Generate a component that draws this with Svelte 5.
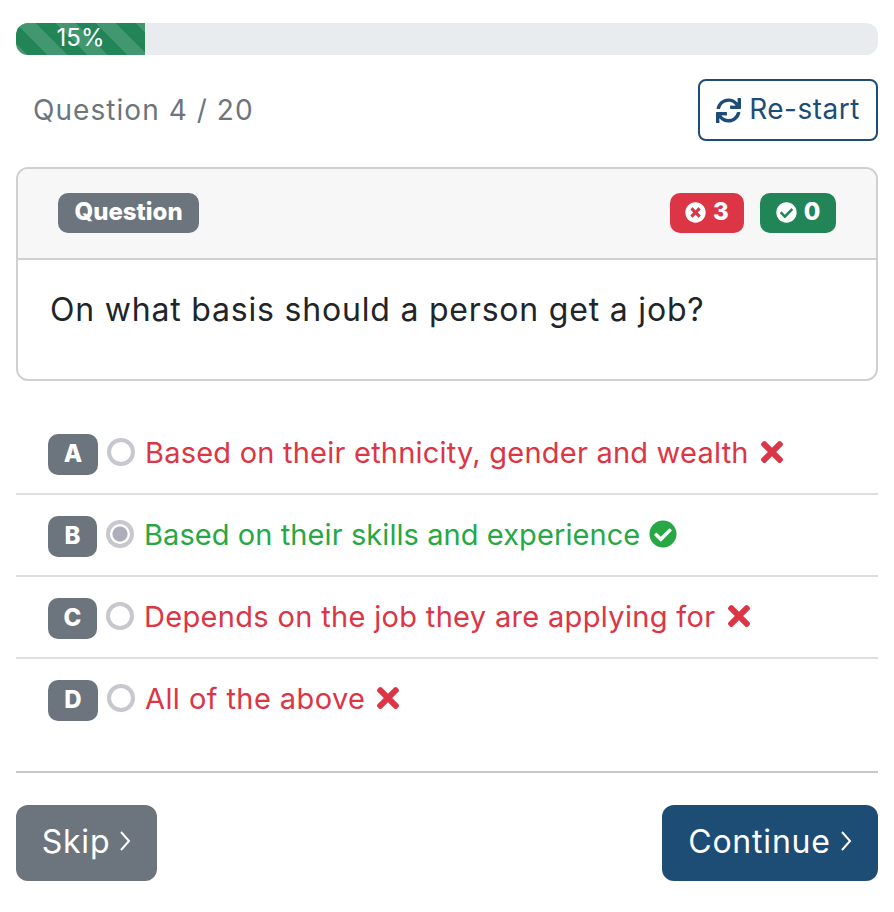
<script lang="ts">
  const options = [
    { letter: 'A', text: 'Based on their ethnicity, gender and wealth', correct: false, selected: false, narrow: false, spacing: 0.22 },
    { letter: 'B', text: 'Based on their skills and experience', correct: true, selected: true, narrow: true, spacing: 0.08 },
    { letter: 'C', text: 'Depends on the job they are applying for', correct: false, selected: false, narrow: true, spacing: 0.33 },
    { letter: 'D', text: 'All of the above', correct: false, selected: false, narrow: false, spacing: 0.42 }
  ];

  const timesPath = 'M242.72 256l100.07-100.07c12.28-12.28 12.28-32.19 0-44.48l-22.24-22.24c-12.28-12.28-32.19-12.28-44.48 0L176 189.28 75.93 89.21c-12.28-12.28-32.19-12.28-44.48 0L9.21 111.45c-12.28 12.28-12.28 32.19 0 44.48L109.28 256 9.21 356.07c-12.28 12.28-12.28 32.19 0 44.48l22.24 22.24c12.28 12.28 32.2 12.28 44.48 0L176 322.72l100.07 100.07c12.28 12.28 32.2 12.28 44.48 0l22.24-22.24c12.28-12.28 12.28-32.19 0-44.48L242.72 256z';
  const checkCirclePath = 'M504 256c0 136.967-111.033 248-248 248S8 392.967 8 256 119.033 8 256 8s248 111.033 248 248zM227.314 387.314l184-184c6.248-6.248 6.248-16.379 0-22.627l-22.627-22.627c-6.248-6.249-16.379-6.249-22.628 0L216 308.118l-70.059-70.059c-6.248-6.248-16.379-6.248-22.628 0l-22.627 22.627c-6.248 6.248-6.248 16.379 0 22.627l104 104c6.249 6.25 16.379 6.25 22.628.001z';
  const timesCirclePath = 'M256 8C119 8 8 119 8 256s111 248 248 248 248-111 248-248S393 8 256 8zm121.6 313.1c4.7 4.7 4.7 12.3 0 17L338 377.6c-4.7 4.7-12.3 4.7-17 0L256 312l-65.1 65.6c-4.7 4.7-12.3 4.7-17 0L134.4 338c-4.7-4.7-4.7-12.3 0-17l65.6-65-65.6-65.1c-4.7-4.7-4.7-12.3 0-17l39.6-39.6c4.7-4.7 12.3-4.7 17 0l65 65.7 65.1-65.6c4.7-4.7 12.3-4.7 17 0l39.6 39.6c4.7 4.7 4.7 12.3 0 17L312 256l65.6 65.1z';
  const syncPath = 'M440.65 12.57l4 82.77A247.16 247.16 0 0 0 255.83 8C134.73 8 33.91 94.92 12.29 209.82A12 12 0 0 0 24.09 224h49.05a12 12 0 0 0 11.67-9.26 175.91 175.91 0 0 1 317-56.94l-101.46-4.86a12 12 0 0 0-12.57 12v47.41a12 12 0 0 0 12 12H500a12 12 0 0 0 12-12V12a12 12 0 0 0-12-12h-47.37a12 12 0 0 0-11.98 12.57zM255.83 432a175.61 175.61 0 0 1-146-77.8l101.8 4.87a12 12 0 0 0 12.57-12v-47.4a12 12 0 0 0-12-12H12a12 12 0 0 0-12 12V500a12 12 0 0 0 12 12h47.35a12 12 0 0 0 12-12.6l-4.15-82.57A247.17 247.17 0 0 0 255.83 504c121.11 0 221.93-86.92 243.55-201.82a12 12 0 0 0-11.8-14.18h-49.05a12 12 0 0 0-11.67 9.26A175.86 175.86 0 0 1 255.83 432z';
</script>

<main class="quiz">
  <div class="progress">
    <div class="progress-bar">15%</div>
  </div>

  <div class="top-row">
    <span class="counter">Question 4 / 20</span>
    <button class="btn-restart">
      <svg class="sync" viewBox="0 0 512 512" aria-hidden="true"><path d={syncPath} /></svg>
      <span>Re-start</span>
    </button>
  </div>

  <section class="card">
    <header class="card-header">
      <span class="badge badge-title">Question</span>
      <div class="scores">
        <span class="badge badge-wrong">
          <svg viewBox="0 0 512 512" aria-hidden="true"><path d={timesCirclePath} /></svg>
          3
        </span>
        <span class="badge badge-right">
          <svg viewBox="0 0 512 512" aria-hidden="true"><path d={checkCirclePath} /></svg>
          0
        </span>
      </div>
    </header>
    <div class="card-body">On what basis should a person get a job?</div>
  </section>

  <ul class="options">
    {#each options as option}
      <li class="option">
        <span class="letter" class:narrow={option.narrow}>{option.letter}</span>
        <span class="radio" class:selected={option.selected}></span>
        <span class="answer" class:correct={option.correct} style:letter-spacing="{option.spacing}px">{option.text}</span>
        {#if option.correct}
          <svg class="mark mark-check" viewBox="0 0 512 512" aria-hidden="true"><path d={checkCirclePath} /></svg>
        {:else}
          <svg class="mark mark-times" viewBox="0 0 352 512" aria-hidden="true"><path d={timesPath} /></svg>
        {/if}
      </li>
    {/each}
  </ul>

  <hr />

  <div class="actions">
    <button class="btn btn-skip">
      Skip
      <svg class="chevron" viewBox="0 0 12 24" aria-hidden="true"><path d="M2 3l8 9-8 9" /></svg>
    </button>
    <button class="btn btn-continue">
      Continue
      <svg class="chevron" viewBox="0 0 12 24" aria-hidden="true"><path d="M2 3l8 9-8 9" /></svg>
    </button>
  </div>
</main>

<style>
  :global(body) {
    background: #fff;
  }

  .quiz {
    box-sizing: border-box;
    width: 894px;
    height: 912px;
    padding: 23px 16px 0;
    font-family: Inter, "Liberation Sans", sans-serif;
    color: #212529;
  }

  .progress {
    height: 32px;
    background: #e9ecef;
    border-radius: 12px;
    overflow: hidden;
  }

  .progress-bar {
    width: 129px;
    height: 100%;
    color: #fff;
    font-size: 24px;
    line-height: 30px;
    text-align: center;
    background-color: #218557;
    background-image: linear-gradient(
      45deg,
      rgba(255, 255, 255, 0.15) 25%,
      transparent 25%,
      transparent 50%,
      rgba(255, 255, 255, 0.15) 50%,
      rgba(255, 255, 255, 0.15) 75%,
      transparent 75%,
      transparent
    );
    background-size: 40px 40px;
  }

  .top-row {
    display: flex;
    justify-content: space-between;
    align-items: center;
    height: 62px;
    margin: 24px 0 26px;
  }

  .counter {
    margin-left: 17px;
    font-size: 28px;
    letter-spacing: 1.05px;
    color: #6c757d;
  }

  .btn-restart {
    display: flex;
    align-items: center;
    justify-content: center;
    gap: 8px;
    box-sizing: border-box;
    width: 180px;
    height: 62px;
    padding: 0;
    background: #fff;
    border: 2px solid #1d4c75;
    border-radius: 8px;
    color: #1d4c75;
    font: inherit;
    font-size: 28px;
    letter-spacing: 0.5px;
  }

  .btn-restart span {
    padding-bottom: 3px;
  }

  .sync {
    width: 25px;
    height: 25px;
    fill: #1d4c75;
  }

  .card {
    height: 214px;
    box-sizing: border-box;
    border: 2px solid #d0d0d0;
    border-radius: 12px;
    overflow: hidden;
  }

  .card-header {
    display: flex;
    justify-content: space-between;
    align-items: center;
    height: 91px;
    box-sizing: border-box;
    padding: 0 40px 2px;
    background: #f7f7f7;
    border-bottom: 2px solid #d0d0d0;
  }

  .scores {
    display: flex;
    gap: 16px;
  }

  .badge {
    display: inline-flex;
    align-items: center;
    justify-content: center;
    gap: 7px;
    box-sizing: border-box;
    height: 40px;
    padding-bottom: 2px;
    border-radius: 10px;
    color: #fff;
    font-size: 24px;
    font-weight: 800;
  }

  .badge svg {
    width: 21px;
    height: 21px;
    margin-top: 2px;
    fill: #fff;
  }

  .badge-title {
    width: 141px;
    background: #6c757d;
  }

  .badge-wrong {
    width: 74px;
    background: #dc3545;
  }

  .badge-right {
    width: 76px;
    background: #218557;
  }

  .card-body {
    padding: 29px 32px;
    font-size: 32px;
    line-height: 42px;
    letter-spacing: 0.8px;
    color: #212529;
  }

  .options {
    list-style: none;
    margin: 32px 0 0;
    padding: 0;
  }

  .option {
    display: flex;
    align-items: center;
    gap: 9px;
    box-sizing: border-box;
    height: 82px;
    padding-left: 32px;
    padding-bottom: 2px;
    border-bottom: 2px solid #dedede;
  }

  .option:last-child {
    padding-bottom: 4px;
    border-bottom: 0;
  }

  .letter {
    display: flex;
    align-items: center;
    justify-content: center;
    width: 50px;
    height: 41px;
    margin-top: 4px;
    padding-bottom: 2px;
    box-sizing: border-box;
    border-radius: 10px;
    background: #6c757d;
    color: #fff;
    font-size: 24px;
    font-weight: 800;
  }

  .letter.narrow {
    width: 49px;
  }

  .radio {
    box-sizing: border-box;
    width: 28px;
    height: 28px;
    border: 4px solid #c6c7cf;
    border-radius: 50%;
    background: #fff;
  }

  .radio.selected {
    background: radial-gradient(circle, #adaeb9 0 7px, #fff 8px);
  }

  .answer {
    margin-left: 1px;
    font-size: 29px;
    color: #dc3545;
  }

  .answer.correct {
    color: #28a745;
  }

  .mark-times {
    width: 24px;
    height: 32px;
    margin-left: 2px;
    fill: #dc3545;
  }

  .mark-check {
    width: 28px;
    height: 28px;
    fill: #28a745;
  }

  hr {
    height: 2px;
    margin: 30px 0 32px;
    border: 0;
    background: #c8c8c8;
  }

  .actions {
    display: flex;
    justify-content: space-between;
  }

  .btn {
    display: flex;
    align-items: center;
    justify-content: center;
    gap: 9px;
    box-sizing: border-box;
    height: 76px;
    padding: 0 0 4px;
    border: 0;
    border-radius: 12px;
    color: #fff;
    font: inherit;
    font-size: 32px;
    letter-spacing: 0.8px;
  }

  .btn-skip {
    width: 141px;
    background: #6c757d;
  }

  .btn-continue {
    width: 216px;
    background: #1d4c75;
  }

  .chevron {
    width: 12px;
    height: 24px;
    fill: none;
    stroke: #fff;
    stroke-width: 2;
  }
</style>
